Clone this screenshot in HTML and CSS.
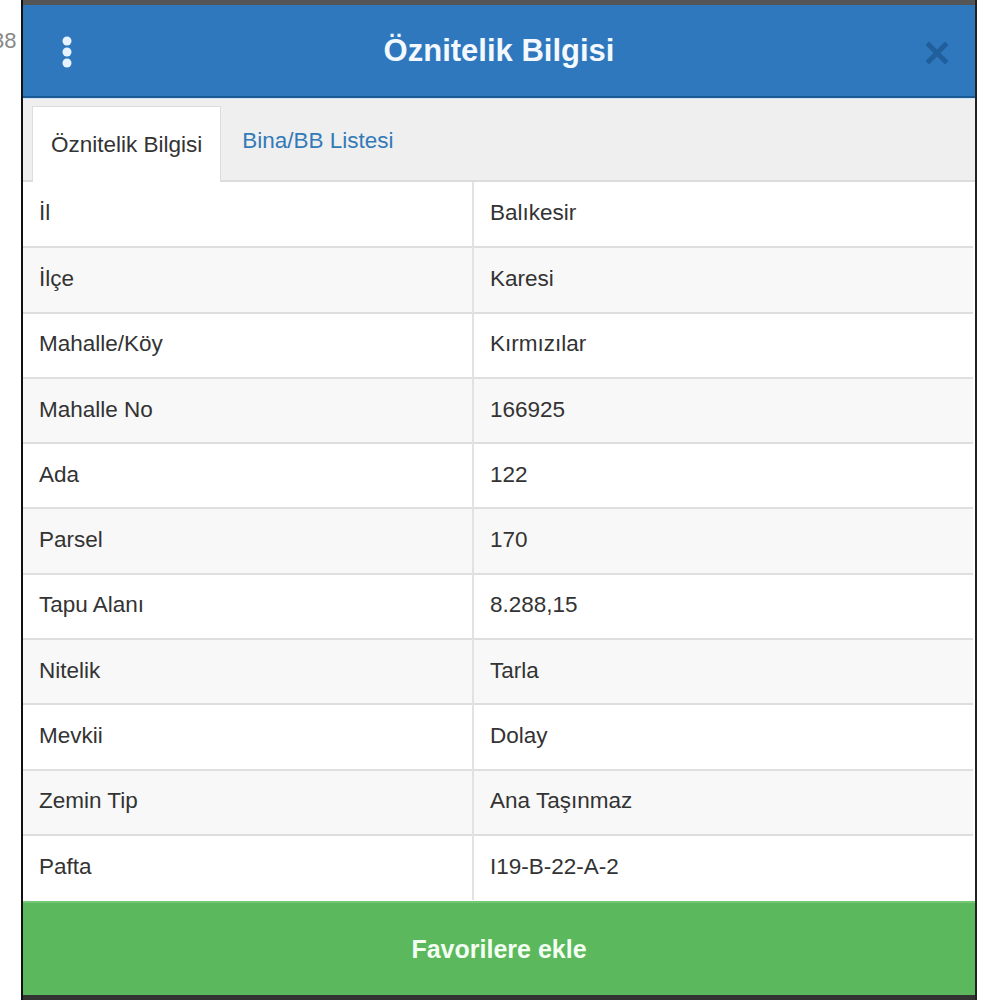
FILE: index.html
```html
<!DOCTYPE html>
<html lang="tr">
<head>
  <meta charset="UTF-8">
  <meta name="viewport" content="width=device-width, initial-scale=1.0">
  <title>Öznitelik Bilgisi</title>
  <link rel="stylesheet" href="styles.css">
</head>
<body>

  <!-- map label peeking out behind the panel -->
  <span class="map-label">38</span>

  <div class="panel">
    <div class="map-strip"></div>

    <!-- Header -->
    <div class="panel-header">
      <button class="menu-btn" type="button">
        <svg width="12" height="34" viewBox="0 0 12 34">
          <circle cx="6" cy="6" r="4.5" fill="#e6f2ff"/>
          <circle cx="6" cy="17" r="4.5" fill="#e6f2ff"/>
          <circle cx="6" cy="28" r="4.5" fill="#e6f2ff"/>
        </svg>
      </button>
      <h1 class="panel-title">Öznitelik Bilgisi</h1>
      <button class="close-btn" type="button">
        <svg width="24" height="24" viewBox="0 0 24 24">
          <path d="M4 4 L20 20 M20 4 L4 20" stroke="#215f9c" stroke-width="5" stroke-linecap="square"/>
        </svg>
      </button>
    </div>

    <!-- Tabs -->
    <ul class="tabs">
      <li class="tab active">Öznitelik Bilgisi</li>
      <li class="tab">Bina/BB Listesi</li>
    </ul>

    <!-- Attribute table -->
    <table class="attr-table">
      <tr><td>İl</td><td>Balıkesir</td></tr>
      <tr><td>İlçe</td><td>Karesi</td></tr>
      <tr><td>Mahalle/Köy</td><td>Kırmızılar</td></tr>
      <tr><td>Mahalle No</td><td>166925</td></tr>
      <tr><td>Ada</td><td>122</td></tr>
      <tr><td>Parsel</td><td>170</td></tr>
      <tr><td>Tapu Alanı</td><td>8.288,15</td></tr>
      <tr><td>Nitelik</td><td>Tarla</td></tr>
      <tr><td>Mevkii</td><td>Dolay</td></tr>
      <tr><td>Zemin Tip</td><td>Ana Taşınmaz</td></tr>
      <tr><td>Pafta</td><td>I19-B-22-A-2</td></tr>
    </table>

    <button class="fav-btn" type="button">Favorilere ekle</button>
    <div class="map-strip bottom"></div>
  </div>

</body>
</html>
```

FILE: styles.css
```css
body {
  margin: 0;
  padding: 0;
  background-color: #fff;
  font-family: "Liberation Sans", Arial, sans-serif;
  position: relative;
  height: 1000px;
  overflow: hidden;
}

.map-label {
  position: absolute;
  left: -8px;
  top: 28px;
  font-size: 22px;
  color: #888;
}

.panel {
  position: relative;
  margin-left: 21px;
  width: 952px;
  height: 1000px;
  border-left: 2px solid #111;
  border-right: 2px solid #222;
  background-color: #fff;
  display: flex;
  flex-direction: column;
}

.map-strip {
  height: 5px;
  background-color: #555;
}

.map-strip.bottom {
  background-color: #333;
}

.panel-header {
  height: 91px;
  background-color: #2f78bd;
  border-bottom: 2px solid #1c5a93;
  box-shadow: 0 1px 0 #cfe4f7;
  display: flex;
  align-items: center;
  justify-content: space-between;
  padding: 0 26px 0 38px;
}

.menu-btn,
.close-btn {
  background: none;
  border: none;
  padding: 0;
  cursor: pointer;
  display: flex;
}

.menu-btn {
  margin-top: 2px;
}

.close-btn {
  margin-top: 4px;
}

.panel-title {
  margin: 0;
  font-size: 31px;
  font-weight: bold;
  color: #f3f9ff;
}

.tabs {
  list-style: none;
  margin: 1px 0 0 0;
  padding: 7px 0 0 9px;
  height: 74px;
  background-color: #efefef;
  border-bottom: 2px solid #dcdcdc;
  display: flex;
}

.tab {
  padding: 0 18px 0 18px;
  display: flex;
  align-items: center;
  font-size: 22.5px;
  color: #337ab7;
  cursor: pointer;
}

.tab + .tab {
  padding-left: 21px;
  padding-bottom: 4px;
}

.tab.active {
  background-color: #fff;
  color: #333;
  border: 1px solid #ddd;
  border-bottom: none;
  margin-bottom: -2px;
}

.attr-table {
  width: 950px;
  border-collapse: collapse;
  font-size: 22.5px;
  color: #333;
}

.attr-table tr {
  height: 65.3px;
}

.attr-table tr:nth-child(even) {
  background-color: #f8f8f8;
}

.attr-table tr + tr td {
  border-top: 2px solid #dedede;
}

.attr-table td {
  padding: 0 0 2px 16px;
}

.attr-table td:first-child {
  width: 433px;
  border-right: 2px solid #e2e2e2;
}

.fav-btn {
  flex: 1;
  margin-top: 1px;
  background-color: #5cb85c;
  border: none;
  border-top: 2px solid #74c874;
  color: #f2fff2;
  font-family: "Liberation Sans", Arial, sans-serif;
  font-size: 25px;
  font-weight: bold;
  cursor: pointer;
  padding-bottom: 0;
}
```
